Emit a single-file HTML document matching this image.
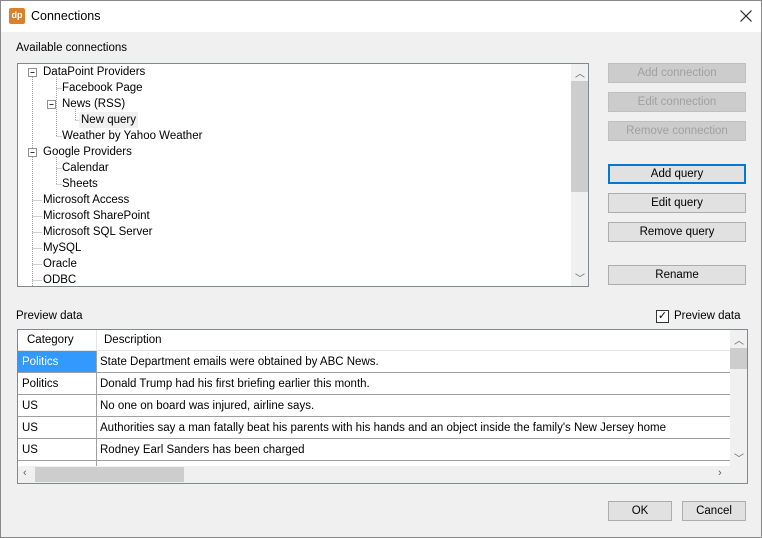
<!DOCTYPE html>
<html><head><style>
*{margin:0;padding:0;box-sizing:border-box}
body{width:762px;height:538px;background:#f0f0f0;font-family:"Liberation Sans",sans-serif;font-size:11.5px;color:#000;position:relative;overflow:hidden;border:1px solid #888}
.a{position:absolute;white-space:nowrap}
.btn{position:absolute;background:#e1e1e1;border:1px solid #adadad;text-align:center;line-height:18px;height:20px;width:138px}
.dis{color:#a0a0a0;background:#cccccc;border-color:#bfbfbf}
.t{position:absolute;line-height:16px;height:16px}
.row{position:absolute;left:0;height:22px;border-bottom:1px solid #a0a0a0;width:712px}
.row span{position:absolute;top:5px}
.sb{position:absolute;background:#f0f0f0}
</style></head><body>
<div class="a" style="left:0;top:0;width:760px;height:31px;background:#fff"></div>
<div class="a" style="left:8px;top:7px;width:16px;height:16px;background:#d9822b;border-radius:2px;color:#fff;font-size:9px;font-weight:bold;text-align:center;line-height:15px">dp</div>
<div class="a" style="left:30px;top:8px;font-size:12.5px">Connections</div>
<svg class="a" style="left:739px;top:9px" width="12" height="12" stroke="#222" stroke-width="1.2"><path d="M0.5 0.5L11.5 11.5M11.5 0.5L0.5 11.5"/></svg>
<div class="a" style="left:15px;top:41px">Available connections</div>

<div class="a" style="left:16px;top:62px;width:572px;height:224px;background:#fff;border:1px solid #828790;overflow:hidden">
<svg width="572" height="224" style="position:absolute;left:0;top:0" stroke="#a0a0a0" stroke-dasharray="1,1" fill="none">
<path d="M14.5 13V224M38.5 13V72M38.5 24.5H44M38.5 72.5H44M38.5 93V120M38.5 104.5H44M38.5 120.5H44M57.5 45V56M57.5 56.5H63M14.5 136.5H24M14.5 152.5H24M14.5 168.5H24M14.5 184.5H24M14.5 200.5H24M14.5 216.5H24"/>
<g stroke-dasharray="none" stroke="#919191" fill="#fff"><rect x="10.5" y="4.5" width="8" height="8"/><rect x="29.5" y="36.5" width="8" height="8"/><rect x="10.5" y="84.5" width="8" height="8"/></g>
<g stroke="#333" stroke-dasharray="none"><path d="M12.5 8.5h4M31.5 40.5h4M12.5 88.5h4"/></g>
</svg>
<div class="t" style="left:25px;top:0">DataPoint Providers</div>
<div class="t" style="left:44px;top:16px">Facebook Page</div>
<div class="t" style="left:44px;top:32px">News (RSS)</div>
<div class="t" style="left:61px;top:48px;background:#f0f0f0;padding:0 2px">New query</div>
<div class="t" style="left:44px;top:64px">Weather by Yahoo Weather</div>
<div class="t" style="left:25px;top:80px">Google Providers</div>
<div class="t" style="left:44px;top:96px">Calendar</div>
<div class="t" style="left:44px;top:112px">Sheets</div>
<div class="t" style="left:25px;top:128px">Microsoft Access</div>
<div class="t" style="left:25px;top:144px">Microsoft SharePoint</div>
<div class="t" style="left:25px;top:160px">Microsoft SQL Server</div>
<div class="t" style="left:25px;top:176px">MySQL</div>
<div class="t" style="left:25px;top:192px">Oracle</div>
<div class="t" style="left:25px;top:208px">ODBC</div>
<div class="sb" style="left:553px;top:0;width:17px;height:222px"></div>
<div class="a" style="left:553px;top:17px;width:17px;height:111px;background:#cdcdcd"></div>
<div class="a" style="left:557px;top:1px;font-size:10px;color:#606060">︿</div>
<div class="a" style="left:557px;top:206px;font-size:10px;color:#606060">﹀</div>
</div>

<div class="btn dis" style="left:607px;top:62px">Add connection</div>
<div class="btn dis" style="left:607px;top:91px">Edit connection</div>
<div class="btn dis" style="left:607px;top:120px">Remove connection</div>
<div class="btn" style="left:607px;top:163px;border:2px solid #0078d7;line-height:16px">Add query</div>
<div class="btn" style="left:607px;top:192px">Edit query</div>
<div class="btn" style="left:607px;top:221px">Remove query</div>
<div class="btn" style="left:607px;top:264px">Rename</div>

<div class="a" style="left:15px;top:309px">Preview data</div>
<div class="a" style="left:655px;top:309px;width:13px;height:13px;border:1px solid #333;background:#fff;font-size:11px;line-height:11px;text-align:center">✓</div>
<div class="a" style="left:673px;top:309px">Preview data</div>

<div class="a" style="left:16px;top:328px;width:731px;height:155px;background:#fff;border:1px solid #828790;overflow:hidden">
<div class="row" style="top:0;height:21px;border-bottom:1px solid #e5e5e5"><span style="left:9px;top:4px">Category</span><span style="left:86px;top:4px">Description</span><div class="a" style="left:78px;top:0;width:1px;height:21px;background:#e5e5e5"></div></div>
<div class="row" style="top:21px"><div class="a" style="left:0;top:0;width:78px;height:21px;background:#3399ff"></div><span style="left:4px;color:#fff">Politics</span><span style="left:82px">State Department emails were obtained by ABC News.</span></div>
<div class="row" style="top:43px"><span style="left:4px">Politics</span><span style="left:82px">Donald Trump had his first briefing earlier this month.</span></div>
<div class="row" style="top:65px"><span style="left:4px">US</span><span style="left:82px">No one on board was injured, airline says.</span></div>
<div class="row" style="top:87px"><span style="left:4px">US</span><span style="left:82px">Authorities say a man fatally beat his parents with his hands and an object inside the family's New Jersey home</span></div>
<div class="row" style="top:109px"><span style="left:4px">US</span><span style="left:82px">Rodney Earl Sanders has been charged</span></div>
<div class="a" style="left:78px;top:21px;width:1px;height:115px;background:#a0a0a0"></div>
<div class="sb" style="left:712px;top:0;width:17px;height:136px"></div>
<div class="a" style="left:712px;top:18px;width:17px;height:21px;background:#cdcdcd"></div>
<div class="a" style="left:716px;top:2px;font-size:10px;color:#606060">︿</div>
<div class="a" style="left:716px;top:120px;font-size:10px;color:#606060">﹀</div>
<div class="sb" style="left:0;top:136px;width:729px;height:17px"></div>
<div class="a" style="left:17px;top:137px;width:149px;height:15px;background:#cdcdcd"></div>
<div class="a" style="left:5px;top:137px;font-size:11px;color:#606060">‹</div>
<div class="a" style="left:700px;top:137px;font-size:11px;color:#606060">›</div>
</div>

<div class="btn" style="left:607px;top:500px;width:64px">OK</div>
<div class="btn" style="left:681px;top:500px;width:64px">Cancel</div>
</body></html>
